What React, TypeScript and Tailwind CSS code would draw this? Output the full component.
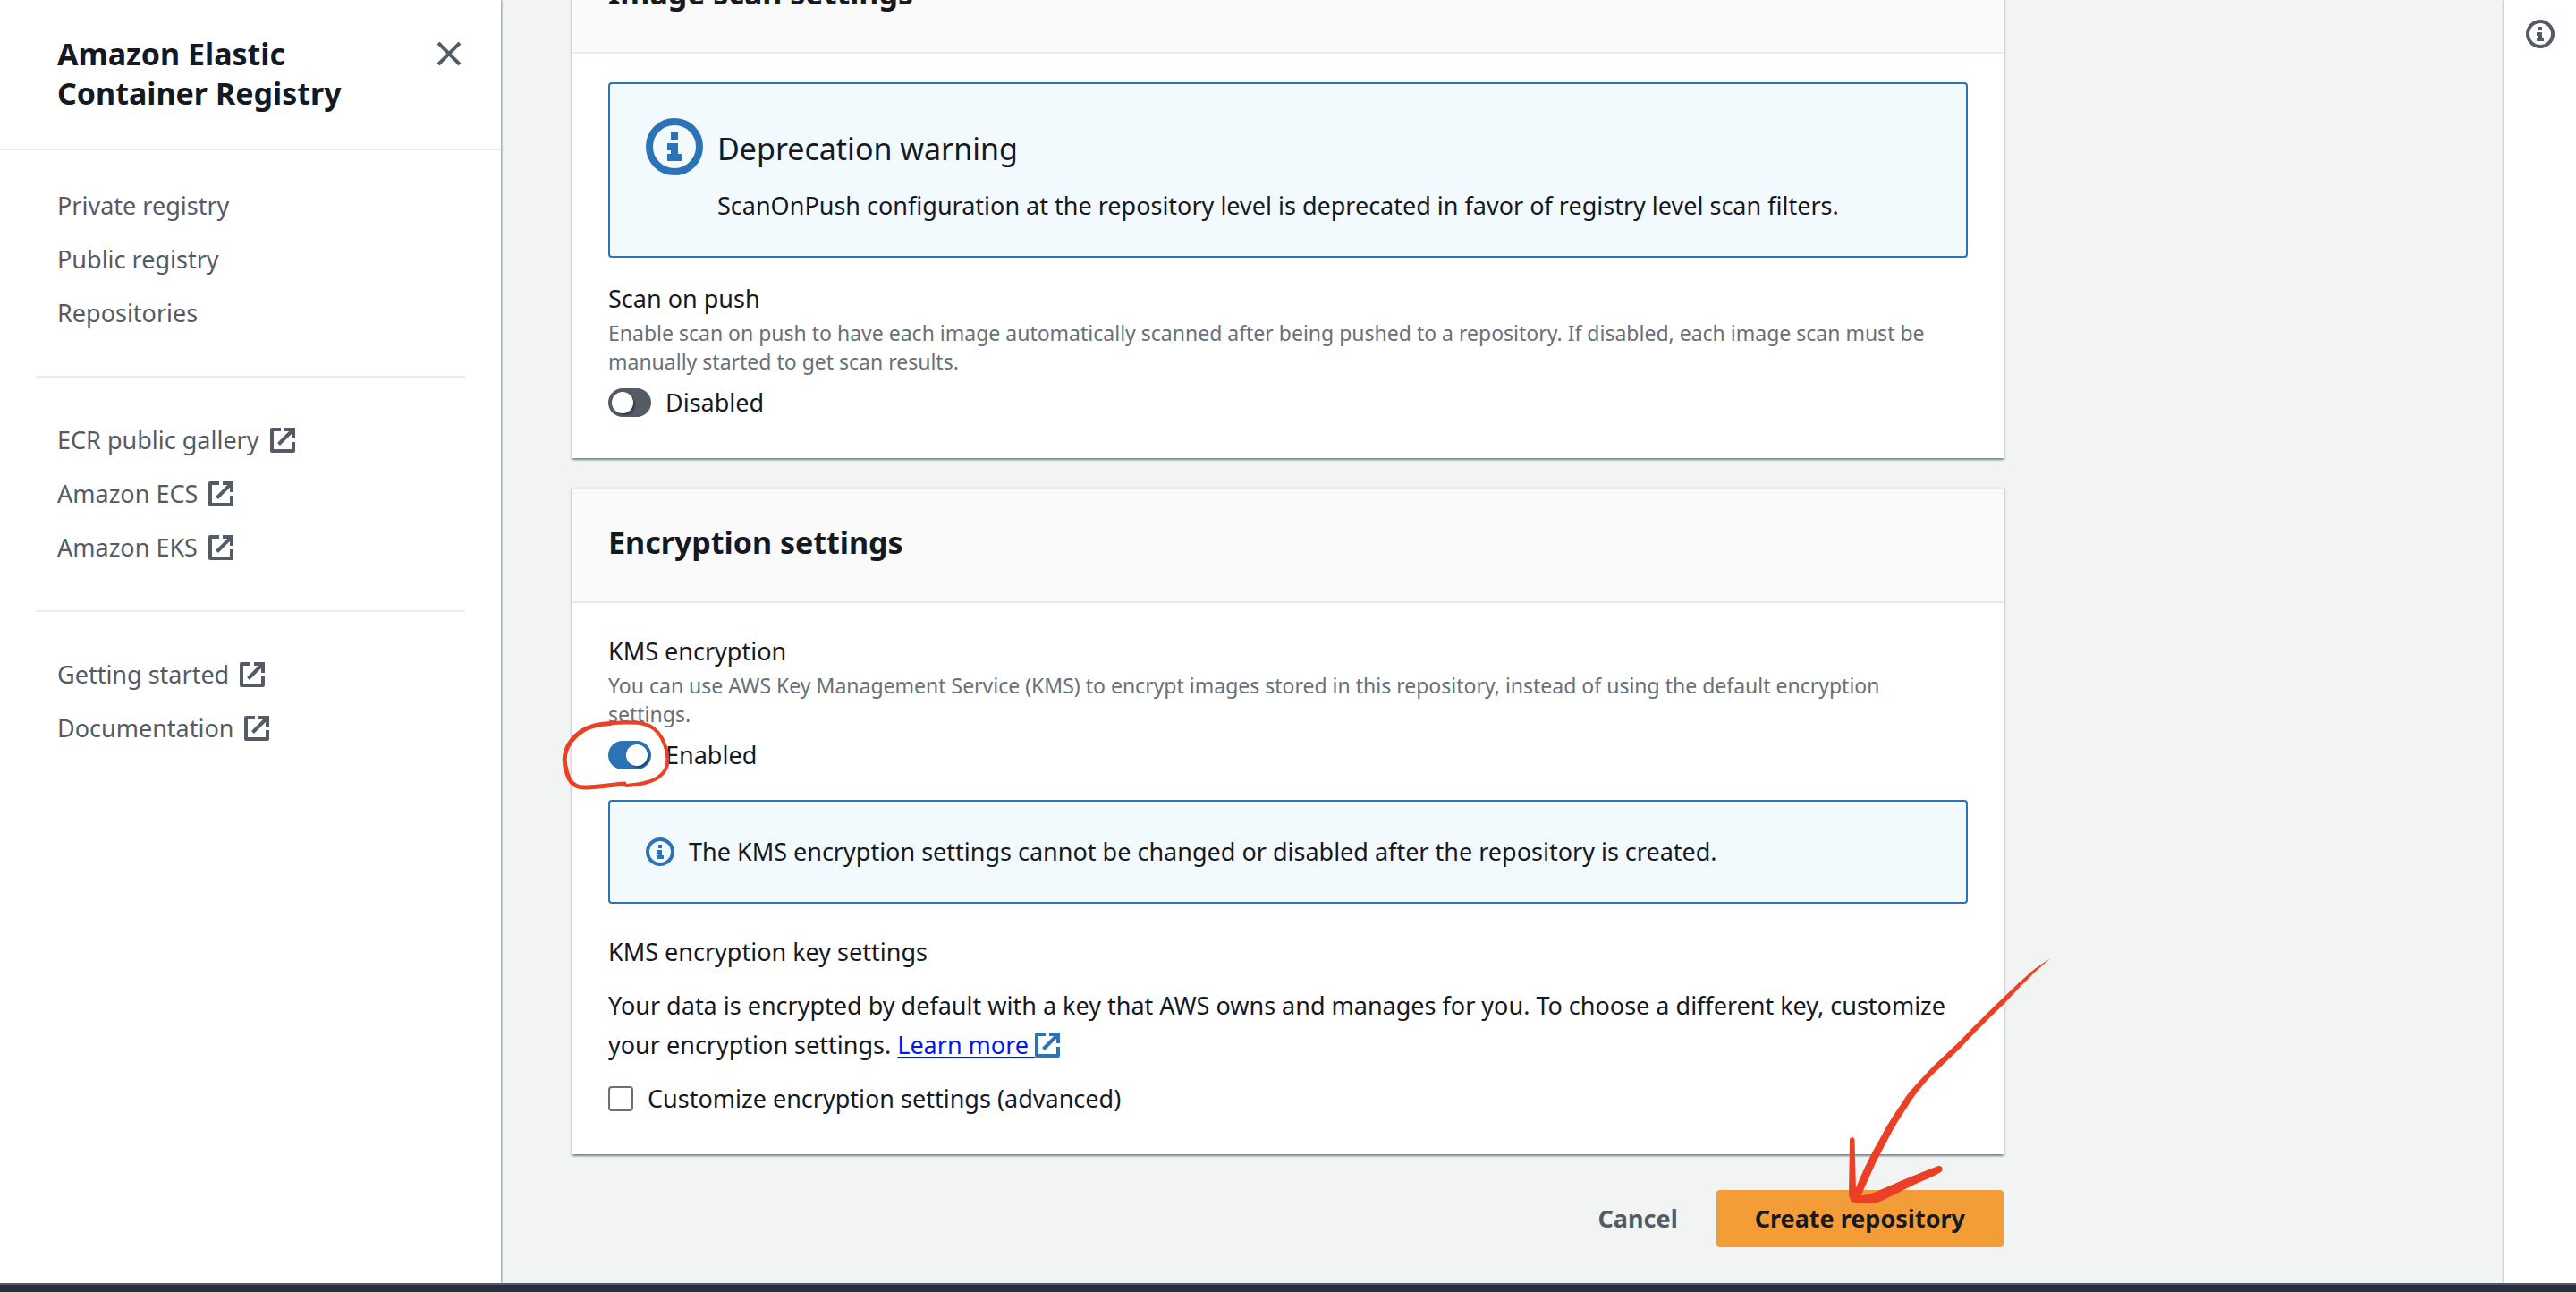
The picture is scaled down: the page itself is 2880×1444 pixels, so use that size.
import React from "react";

type IconProps = { className?: string };

function InfoIcon({ className }: IconProps) {
  return (
    <svg viewBox="0 0 16 16" aria-hidden="true" className={className}>
      <circle cx="8" cy="8" r="7" fill="none" stroke="currentColor" strokeWidth="2" />
      <path fill="currentColor" d="M7 4h2v2H7zM6 7h3v3h1v2H6v-2h1V9H6z" />
    </svg>
  );
}

function ExternalIcon({ className }: IconProps) {
  return (
    <svg
      viewBox="0 0 28 28"
      aria-hidden="true"
      fill="none"
      stroke="currentColor"
      strokeWidth="4"
      strokeLinejoin="round"
      className={className}
    >
      <path d="M12 2H2v24h24V16" />
      <path d="M16 2h10v10" strokeLinejoin="miter" />
      <path d="M9.500 18.500L25 3" />
    </svg>
  );
}

function CloseIcon({ className }: IconProps) {
  return (
    <svg viewBox="0 0 28 28" aria-hidden="true" fill="none" stroke="currentColor" strokeWidth="4" className={className}>
      <path d="M2 2l24 24M26 2L2 26" />
    </svg>
  );
}

const navGroups: { label: string; external: boolean }[][] = [
  [
    { label: "Private registry", external: false },
    { label: "Public registry", external: false },
    { label: "Repositories", external: false },
  ],
  [
    { label: "ECR public gallery", external: true },
    { label: "Amazon ECS", external: true },
    { label: "Amazon EKS", external: true },
  ],
  [
    { label: "Getting started", external: true },
    { label: "Documentation", external: true },
  ],
];

function Sidebar() {
  return (
    <aside className="z-10 w-140 shrink-0 bg-white shadow-[1px_0_2px_0_rgba(0,28,36,0.45)]">
      <div className="flex items-start border-b-2 border-[#ebebeb] pt-[38px] pr-11 pb-10 pl-16">
        <h2 className="flex-1 text-[34px] leading-11 font-bold">Amazon Elastic Container Registry</h2>
        <button type="button" aria-label="Close navigation" className="mt-2 text-[#545b64]">
          <CloseIcon className="size-7" />
        </button>
      </div>
      <nav className="px-10 pt-10 text-[#545b64]">
        {navGroups.map((group, index) => (
          <ul
            key={index}
            className="mb-12 flex flex-col gap-4 border-b-2 border-[#ebebeb] px-6 pb-12 last:border-b-0"
          >
            {group.map((item) => (
              <li key={item.label}>
                <a href="#" className="inline-flex items-center gap-3">
                  {item.label}
                  {item.external && <ExternalIcon className="size-7" />}
                </a>
              </li>
            ))}
          </ul>
        ))}
      </nav>
    </aside>
  );
}

function Card({ title, children }: { title: string; children: React.ReactNode }) {
  return (
    <section className="border-t-2 border-[#ebebeb] bg-white shadow-[0_2px_2px_0_rgba(0,28,36,0.3),2px_2px_2px_0_rgba(0,28,36,0.15),-2px_2px_2px_0_rgba(0,28,36,0.15)]">
      <header className="border-b-2 border-[#ebebeb] bg-[#fafafa] px-10 pt-[38px] pb-11">
        <h2 className="text-[34px] leading-11 font-bold">{title}</h2>
      </header>
      <div className="px-10 pt-8 pb-10">{children}</div>
    </section>
  );
}

function Field({
  id,
  label,
  description,
  state,
  checked,
  children,
}: {
  id: string;
  label: string;
  description: string;
  state: string;
  checked: boolean;
  children?: React.ReactNode;
}) {
  return (
    <div>
      <h3>{label}</h3>
      <p id={`${id}-description`} className="pr-4 text-[23px] leading-8 text-[#687078]">
        {description}
      </p>
      <div className="relative mt-2 flex items-center gap-4">
        <input
          id={id}
          type="checkbox"
          role="switch"
          defaultChecked={checked}
          aria-describedby={`${id}-description`}
          className="flex h-8 w-12 appearance-none items-center rounded-full bg-[#545b64] px-1 before:size-6 before:rounded-full before:bg-white before:shadow-[2px_2px_2px_0_rgba(0,0,0,0.35)] before:content-[''] checked:justify-end checked:bg-[#2c72b7]"
        />
        <label htmlFor={id}>{state}</label>
        {children}
      </div>
    </div>
  );
}

function CircleMark() {
  return (
    <svg
      viewBox="0 0 180 110"
      aria-hidden="true"
      fill="none"
      stroke="#eb4025"
      strokeLinecap="round"
      strokeLinejoin="round"
      className="pointer-events-none absolute -top-8 -left-15 h-[110px] w-[180px]"
    >
      <path
        strokeWidth="4"
        d="M62 18.500C72 17.500 90 17 98 18.500C108 20.500 115 26 120 35C125 45 127.500 55 126 65C123 75 115 81 104 84C96 86.500 88 87.500 80 88"
      />
      <path
        strokeWidth="5"
        d="M78 86C66 87 50 89.500 36 90C28 90.500 20 88 16 80C12 70 10 60 12 52C15 40 22 32 34 25C43 20.500 52 19 62 18.500"
      />
    </svg>
  );
}

function ArrowMark() {
  return (
    <svg
      viewBox="320 20 250 300"
      aria-hidden="true"
      fill="#eb4025"
      className="pointer-events-none absolute -right-[70px] bottom-[34px] h-[300px] w-[250px]"
    >
      <path d="M551.400 32C543 37 533 44 525 51.500C515 60 505 70 496 78.500C486 88 477 97 467 107C458 116 450 125 443 131C436 138 428 145 421.500 151.500C413 160 406 168 399.200 175.500C393 182 389 188 384.800 195C378 205 371 215 365.500 226C360 236 354 246 349.200 256C343 268 338 280 334 290L332 300L338 300C340 297 341 295 342 293L356.800 260C362 250 367 240 372.500 230C378 219 385 208 391.200 199C396 191 400 185 405 179C412 170 419 162 427 155C434 148 441 142 447.500 135.500C455 128 463 119 471 111C481 101 490 92 500 82.500C509 73 519 62 528.500 53C536 45 544 39 551.400 32Z" />
      <path d="M328 234C328 231 333 230 333.500 234L335 290L338 300L331 304C329 301 327 299 327 294Z" />
      <path d="M427 263C432 262 432.500 268 430 270C420 276 408 280 396 286C384 292 372 298 362 303C353 306 341 304.500 334 304.500C329 302 329 297 334 296C345 297 353 294 362 290C384 280 406 271 427 263Z" />
    </svg>
  );
}

export default function App() {
  return (
    <div className="flex h-screen flex-col overflow-hidden bg-[#f2f4f3] font-['Noto_Sans',sans-serif] text-[27px] leading-11 text-[#16191f]">
      <div className="flex min-h-0 flex-1">
        <Sidebar />
        <main className="min-w-0 flex-1 overflow-hidden px-20">
          <div className="-mt-[70px] flex max-w-[1600px] flex-col gap-8">
            <Card title="Image scan settings">
              <div className="mb-6 flex gap-4 rounded-sm border-2 border-[#2c72b7] bg-[#f2fafd] px-10">
                <InfoIcon className="mt-[38px] size-16 shrink-0 text-[#2c72b7]" />
                <div className="flex flex-col gap-5 pt-[50px] pb-[34px]">
                  <h3 className="text-[34px]">Deprecation warning</h3>
                  <p>
                    ScanOnPush configuration at the repository level is deprecated in favor of registry level scan
                    filters.
                  </p>
                </div>
              </div>
              <Field
                id="scan-on-push"
                label="Scan on push"
                description="Enable scan on push to have each image automatically scanned after being pushed to a repository. If disabled, each image scan must be manually started to get scan results."
                state="Disabled"
                checked={false}
              />
            </Card>

            <Card title="Encryption settings">
              <Field
                id="kms-encryption"
                label="KMS encryption"
                description="You can use AWS Key Management Service (KMS) to encrypt images stored in this repository, instead of using the default encryption settings."
                state="Enabled"
                checked
              >
                <CircleMark />
              </Field>
              <div className="mt-7 flex items-center gap-4 rounded-sm border-2 border-[#2c72b7] bg-[#f2fafd] px-10 py-[34px]">
                <InfoIcon className="size-8 shrink-0 text-[#2c72b7]" />
                <p>The KMS encryption settings cannot be changed or disabled after the repository is created.</p>
              </div>
              <h3 className="mt-8">KMS encryption key settings</h3>
              <p className="mt-4">
                Your data is encrypted by default with a key that AWS owns and manages for you. To choose a different
                key, customize your encryption settings.{" "}
                <a href="#" className="text-[#0018f0] underline decoration-2 underline-offset-3">
                  Learn more{" "}
                  <ExternalIcon className="inline size-7 align-[-4px] text-[#2c72b7]" />
                </a>
              </p>
              <div className="mt-4 flex items-center gap-4">
                <input
                  id="customize"
                  type="checkbox"
                  className="size-7 appearance-none rounded-sm border-2 border-[#687078] bg-white checked:bg-[#2c72b7]"
                />
                <label htmlFor="customize">Customize encryption settings (advanced)</label>
              </div>
            </Card>

            <div className="mt-2 flex justify-end font-bold">
              <button type="button" className="h-16 px-[43px] text-[#545b64]">
                Cancel
              </button>
              <div className="relative">
                <button type="button" className="h-16 rounded-sm bg-[#f29d38] px-[43px]">
                  Create repository
                </button>
                <ArrowMark />
              </div>
            </div>
          </div>
        </main>
        <aside className="flex w-20 shrink-0 flex-col items-center bg-white pt-[22px] shadow-[-1px_0_2px_0_rgba(0,28,36,0.45)]">
          <button type="button" aria-label="Open help panel" className="text-[#545b64]">
            <InfoIcon className="size-8" />
          </button>
        </aside>
      </div>
      <footer className="z-20 h-2.5 shrink-0 border-t-2 border-[#545b64] bg-[#262f3e]" />
    </div>
  );
}
